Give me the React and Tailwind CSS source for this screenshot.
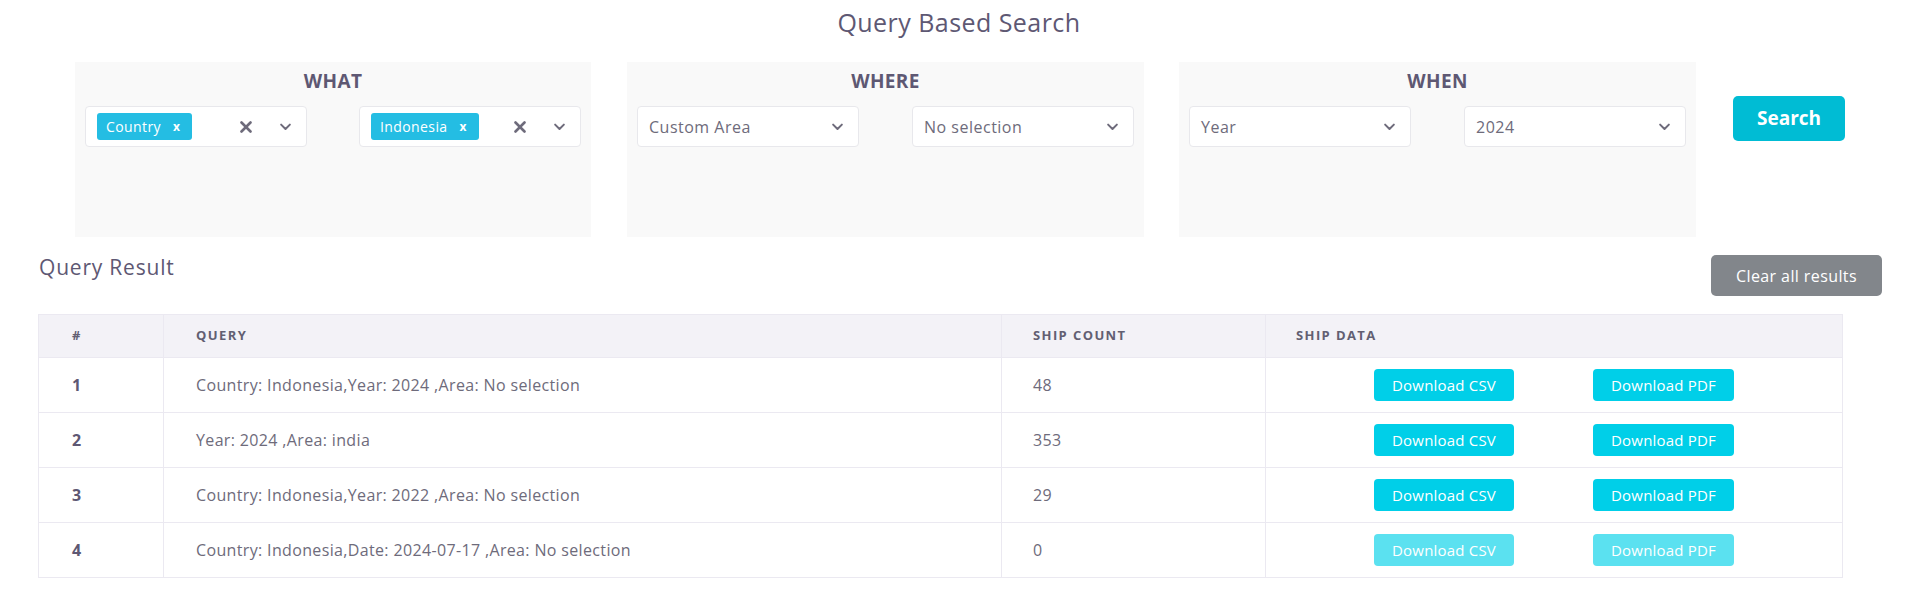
import React from "react";

const Chevron = () => (
  <svg width="15" height="15" viewBox="0 0 24 24" fill="none" stroke="#6e6b7b" strokeWidth="3.2" strokeLinecap="round" strokeLinejoin="round">
    <polyline points="5 9 12 16 19 9" />
  </svg>
);

const Cross = () => (
  <svg width="12" height="12" viewBox="0 0 12 12" fill="none" stroke="#6e6b7b" strokeWidth="2.6" strokeLinecap="round">
    <line x1="1.5" y1="1.5" x2="10.5" y2="10.5" />
    <line x1="10.5" y1="1.5" x2="1.5" y2="10.5" />
  </svg>
);

const ChipSelect = ({ label }) => (
  <div className="w-[222px] h-[41px] bg-white border border-[#e8e8ec] rounded-[4px] flex items-center pl-[11px] pr-[13px]">
    <span className="h-[27px] bg-[#24bde3] rounded-[3px] flex items-center pl-[9px] pr-[12px] text-white text-[14px] tracking-[0.4px]">
      {label}
      <span className="ml-[12px] text-[12px] font-bold leading-none">x</span>
    </span>
    <div className="flex-1" />
    <Cross />
    <span className="ml-[26px] flex items-center"><Chevron /></span>
  </div>
);

const PlainSelect = ({ label }) => (
  <div className="w-[222px] h-[41px] bg-white border border-[#e8e8ec] rounded-[4px] flex items-center justify-between pl-[11px] pr-[13px] text-[16px] tracking-[0.5px] text-[#6e6b7b]">
    <span>{label}</span>
    <Chevron />
  </div>
);

const Panel = ({ title, children, w }) => (
  <div className={`${w} h-[175px] bg-[#f9f9f9] px-[10px]`}>
    <div className="pt-[5px] h-[44px] text-center text-[19px] tracking-[0.4px] font-bold text-[#5e5873]">{title}</div>
    <div className="flex justify-between">{children}</div>
  </div>
);

const rows = [
  { n: 1, q: "Country: Indonesia,Year: 2024 ,Area: No selection", c: "48", on: true },
  { n: 2, q: "Year: 2024 ,Area: india", c: "353", on: true },
  { n: 3, q: "Country: Indonesia,Year: 2022 ,Area: No selection", c: "29", on: true },
  { n: 4, q: "Country: Indonesia,Date: 2024-07-17 ,Area: No selection", c: "0", on: false },
];

export default function App() {
  return (
    <div className="w-[1918px] h-[615px] bg-white text-[#6e6b7b]" style={{ fontFamily: '"Open Sans", sans-serif' }}>
      <h1 className="pt-[4px] h-[62px] text-center text-[25px] tracking-[0.45px] text-[#5e5873]">Query Based Search</h1>

      <div className="flex items-start pl-[75px]">
        <Panel title="WHAT" w="w-[516px]">
          <ChipSelect label="Country" />
          <ChipSelect label="Indonesia" />
        </Panel>
        <div className="w-[36px]" />
        <Panel title="WHERE" w="w-[517px]">
          <PlainSelect label="Custom Area" />
          <PlainSelect label="No selection" />
        </Panel>
        <div className="w-[35px]" />
        <Panel title="WHEN" w="w-[517px]">
          <PlainSelect label="Year" />
          <PlainSelect label="2024" />
        </Panel>
        <button className="ml-[37px] mt-[34px] w-[112px] h-[45px] bg-[#00bcd4] rounded-[5px] text-white text-[19px] font-bold">
          Search
        </button>
      </div>

      <div className="flex justify-between items-start pl-[39px] pr-[36px] pt-[18px]">
        <h2 className="text-[21px] tracking-[0.8px] text-[#5e5873] mt-[-3px]">Query Result</h2>
        <button className="w-[171px] h-[41px] bg-[#82868b] rounded-[5px] text-white text-[16px] tracking-[0.4px]">
          Clear all results
        </button>
      </div>

      <div className="pl-[38px] pt-[18px]">
        <table className="w-[1804px] border-collapse border border-[#ebe9f1] table-fixed">
          <colgroup>
            <col className="w-[125px]" />
            <col className="w-[838px]" />
            <col className="w-[264px]" />
            <col className="w-[577px]" />
          </colgroup>
          <thead>
            <tr className="h-[43px] bg-[#f3f2f7] text-[13px] font-bold uppercase tracking-[1.4px] text-[#625f72] text-left">
              <th className="pl-[33px] border border-[#ebe9f1] font-bold">#</th>
              <th className="pl-[32px] border border-[#ebe9f1] font-bold">Query</th>
              <th className="pl-[31px] border border-[#ebe9f1] font-bold">Ship Count</th>
              <th className="pl-[30px] border border-[#ebe9f1] font-bold">Ship Data</th>
            </tr>
          </thead>
          <tbody>
            {rows.map((r) => (
              <tr key={r.n} className="h-[55px] text-[16px] tracking-[0.35px]">
                <td className="pl-[33px] border border-[#ebe9f1] font-bold text-[#5e5873]">{r.n}</td>
                <td className="pl-[32px] border border-[#ebe9f1]">{r.q}</td>
                <td className="pl-[31px] border border-[#ebe9f1]">{r.c}</td>
                <td className="pl-[108px] border border-[#ebe9f1] border-l-[#e3e1ea]">
                  <div className="flex items-center gap-[79px]">
                    <button className={`w-[140px] h-[32px] rounded-[4px] text-white text-[15px] tracking-[0.2px] ${r.on ? "bg-[#00cfe8]" : "bg-[#5be1f0]"}`}>
                      Download CSV
                    </button>
                    <button className={`w-[141px] h-[32px] rounded-[4px] text-white text-[15px] tracking-[0.2px] ${r.on ? "bg-[#00cfe8]" : "bg-[#5be1f0]"}`}>
                      Download PDF
                    </button>
                  </div>
                </td>
              </tr>
            ))}
          </tbody>
        </table>
      </div>
    </div>
  );
}
